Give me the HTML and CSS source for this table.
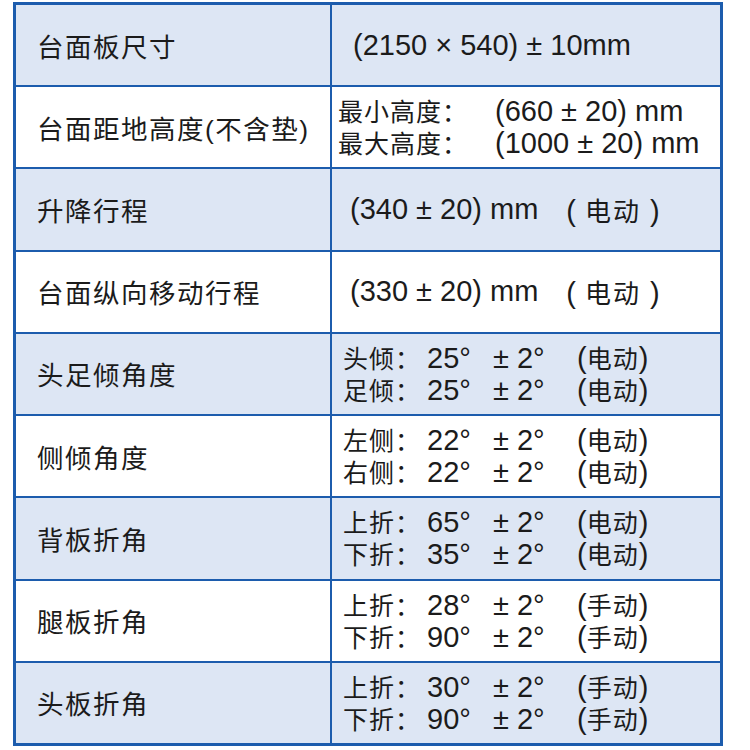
FILE: index.html
```html
<!DOCTYPE html>
<html lang="zh-CN">
<head>
<meta charset="utf-8">
<title>规格参数</title>
<link rel="stylesheet" href="styles.css">
</head>
<body>
<div class="spec">
  <div class="cell name shade">台面板尺寸</div>
  <div class="cell val one shade pad-a"><span class="num">(2150 × 540) ± 10mm</span></div>

  <div class="cell name">台面距地高度(不含垫)</div>
  <div class="cell val two pad-c">
    <div class="line"><span class="lab w1">最小高度：</span><span class="num">(660 ± 20) mm</span></div>
    <div class="line"><span class="lab w1">最大高度：</span><span class="num">(1000 ± 20) mm</span></div>
  </div>

  <div class="cell name shade">升降行程</div>
  <div class="cell val one shade pad-b"><span class="num">(340 ± 20) mm</span><span class="fw">(<span class="cj">电动</span>)</span></div>

  <div class="cell name">台面纵向移动行程</div>
  <div class="cell val one pad-b"><span class="num">(330 ± 20) mm</span><span class="fw">(<span class="cj">电动</span>)</span></div>

  <div class="cell name shade">头足倾角度</div>
  <div class="cell val two shade pad-d">
    <div class="line"><span class="lab w2">头倾：</span><span class="num w3">25°</span><span class="num w4">± 2°</span><span class="mode">(<span class="cj">电动</span>)</span></div>
    <div class="line"><span class="lab w2">足倾：</span><span class="num w3">25°</span><span class="num w4">± 2°</span><span class="mode">(<span class="cj">电动</span>)</span></div>
  </div>

  <div class="cell name">侧倾角度</div>
  <div class="cell val two pad-d">
    <div class="line"><span class="lab w2">左侧：</span><span class="num w3">22°</span><span class="num w4">± 2°</span><span class="mode">(<span class="cj">电动</span>)</span></div>
    <div class="line"><span class="lab w2">右侧：</span><span class="num w3">22°</span><span class="num w4">± 2°</span><span class="mode">(<span class="cj">电动</span>)</span></div>
  </div>

  <div class="cell name shade">背板折角</div>
  <div class="cell val two shade pad-d">
    <div class="line"><span class="lab w2">上折：</span><span class="num w3">65°</span><span class="num w4">± 2°</span><span class="mode">(<span class="cj">电动</span>)</span></div>
    <div class="line"><span class="lab w2">下折：</span><span class="num w3">35°</span><span class="num w4">± 2°</span><span class="mode">(<span class="cj">电动</span>)</span></div>
  </div>

  <div class="cell name">腿板折角</div>
  <div class="cell val two pad-d">
    <div class="line"><span class="lab w2">上折：</span><span class="num w3">28°</span><span class="num w4">± 2°</span><span class="mode">(<span class="cj">手动</span>)</span></div>
    <div class="line"><span class="lab w2">下折：</span><span class="num w3">90°</span><span class="num w4">± 2°</span><span class="mode">(<span class="cj">手动</span>)</span></div>
  </div>

  <div class="cell name shade">头板折角</div>
  <div class="cell val two shade pad-d">
    <div class="line"><span class="lab w2">上折：</span><span class="num w3">30°</span><span class="num w4">± 2°</span><span class="mode">(<span class="cj">手动</span>)</span></div>
    <div class="line"><span class="lab w2">下折：</span><span class="num w3">90°</span><span class="num w4">± 2°</span><span class="mode">(<span class="cj">手动</span>)</span></div>
  </div>
</div>
</body>
</html>
```

FILE: styles.css
```css
html, body {
  margin: 0;
  padding: 0;
  background: #ffffff;
}

body {
  font-family: "Liberation Sans", "Noto Sans CJK SC", sans-serif;
  color: #1b1b1b;
}

.spec {
  box-sizing: border-box;
  width: 710px;
  height: 744px;
  margin: 2px 0 0 13px;
  border: 3px solid #1c5cad;
  background: #1c5cad;
  display: grid;
  grid-template-columns: 314px 1fr;
  grid-auto-rows: 1fr;
  gap: 2px;
}

.cell {
  background: #ffffff;
  display: flex;
  align-items: center;
  white-space: nowrap;
}

.cell.shade {
  background: #dde6f4;
}

.name {
  padding-left: 21px;
  font-size: 26.5px;
  letter-spacing: 1.5px;
}

.val {
  font-size: 25px;
}

.two {
  flex-direction: column;
  align-items: flex-start;
  justify-content: center;
}

.pad-a { padding-left: 21px; }
.pad-b { padding-left: 18px; }
.pad-c { padding-left: 6px; }
.pad-d { padding-left: 11px; }

.line {
  line-height: 32px;
  height: 32px;
  display: flex;
  align-items: baseline;
}

.num {
  font-size: 29px;
}

.fw {
  font-size: 29px;
  margin-left: 28px;
}

.fw .cj {
  font-size: 26px;
  margin: 0 9px;
  letter-spacing: 2px;
}

.lab {
  display: inline-block;
  letter-spacing: 1px;
}

.w1 { width: 157px; }
.w2 { width: 84px; }
.w3 { width: 66px; display: inline-block; }
.w4 { width: 84px; display: inline-block; }

.mode {
  font-size: 29px;
}

.mode .cj {
  font-size: 25px;
  letter-spacing: 1px;
}
```
